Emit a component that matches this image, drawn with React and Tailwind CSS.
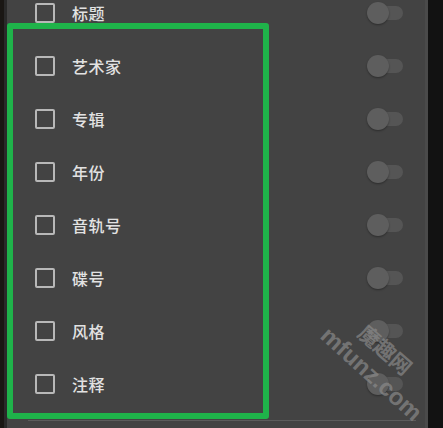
import React from "react";

const items = ["标题", "艺术家", "专辑", "年份", "音轨号", "碟号", "风格", "注释"];

function Row({ label }) {
  return (
    <div className="flex h-[53px] items-center">
      <div className="ml-[28px] h-[20px] w-[20px] rounded-[2px] border-2 border-[#b8b8b8]" />
      <div className="ml-[17px] text-[16px] font-medium leading-none text-[#e2e2e2] tracking-[0.5px]">{label}</div>
      <div className="ml-auto mr-[22px] relative h-[22px] w-[36px] flex items-center">
        <div className="absolute left-[12px] h-[14px] w-[24px] rounded-full bg-[#555555]" />
        <div className="absolute left-0 h-[22px] w-[22px] rounded-full bg-[#5e5e5e] shadow-[0_1px_2px_rgba(0,0,0,0.35)]" />
      </div>
    </div>
  );
}

export default function App() {
  return (
    <div
      className="relative flex h-[428px] w-[443px] overflow-hidden bg-[#121212]"
      style={{ fontFamily: '"Noto Sans CJK SC", "Noto Sans", sans-serif' }}
    >
      <div className="w-[4px] bg-[#1a1714]" />
      <div className="w-[3px] bg-[#2a2a2a]" />
      <div className="flex w-[421px] flex-col bg-[#434343] border-r-[3px] border-[#4a4a4a]">
        <div className="-mt-[14px] flex flex-col">
          {items.map((t) => (
            <Row key={t} label={t} />
          ))}
        </div>
        <div className="ml-[21px] mr-[9px] mt-[10px] h-[1px] bg-[#5c5c5c]" />
      </div>

      <div className="absolute left-[7px] top-[23px] h-[396px] w-[262px] rounded-[3px] border-[6px] border-[#1fb34a]" />

      <div className="pointer-events-none absolute left-[308px] top-[362px] rotate-[42deg] whitespace-nowrap text-[24px] font-bold leading-none text-[#8a8a8a]/70"
        style={{ fontFamily: '"Liberation Sans", sans-serif' }}>
        mfunz.com
      </div>
      <div className="pointer-events-none absolute left-[354px] top-[339px] rotate-[41deg] whitespace-nowrap text-[21px] font-bold leading-none text-[#8a8a8a]/70">
        魔趣网
      </div>
    </div>
  );
}
